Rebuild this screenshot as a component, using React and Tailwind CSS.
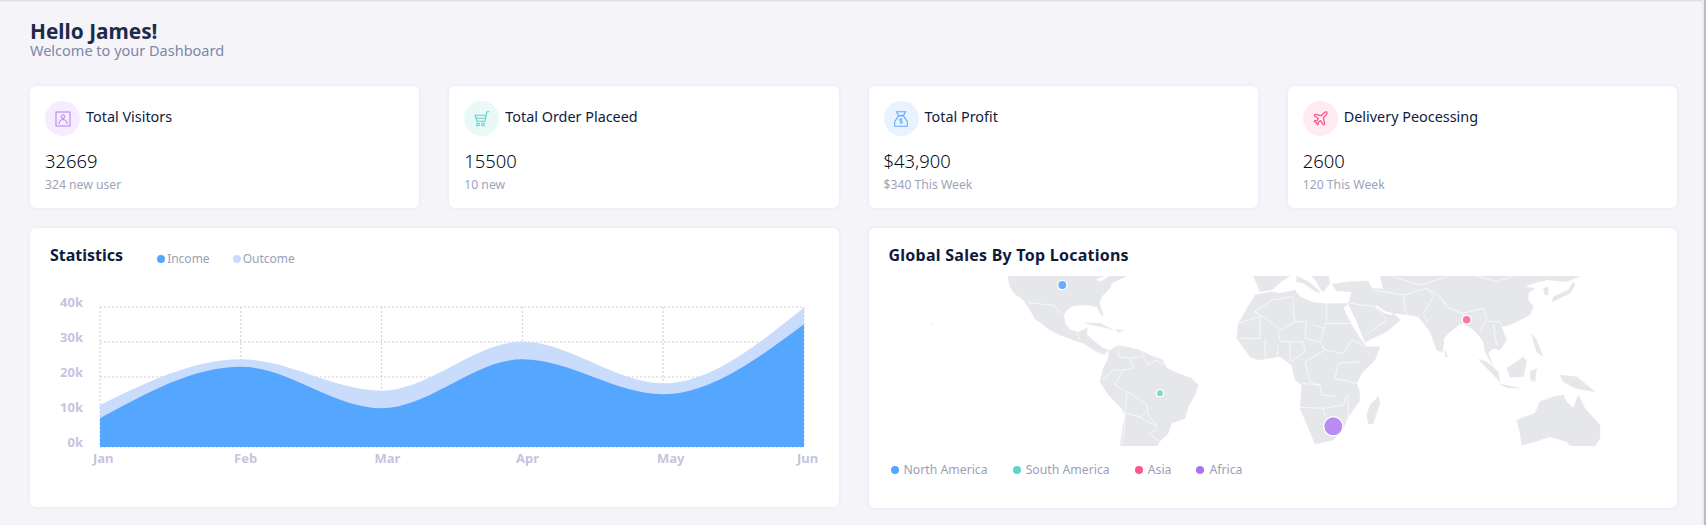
import React from "react";

const font = { fontFamily: '"Noto Sans", "Open Sans", sans-serif' };

const landZ7 = [
  "414,153 418,180 432,205 460,225 478,252 497,285 510,292 535,312 570,330 610,345 640,355 665,372 690,385 705,388 715,375 700,370 680,355 665,342 650,328 652,308 625,322 600,315 585,295 582,270 590,255 610,242 650,240 680,245 695,272 700,270 688,235 695,215 720,190 725,175 745,165 770,153",
  "645,293 690,295 730,315 700,307 665,300",
  "735,313 762,316 745,322",
  "715,378 745,362 770,365 810,375 850,395 880,405 890,430 925,445 965,460 985,480 975,510 955,545 945,580 905,595 895,625 868,650 862,663 750,663 758,610 765,570 755,550 715,510 690,470 700,430 715,400",
];
const bordersZ7 = [
  "475,232 520,238 550,240 578,270",
  "620,322 630,345",
  "745,365 745,395 780,400 790,430 760,435 735,480 770,500 790,510 830,540 835,570 860,600 860,615 835,625 868,650",
  "695,465 730,435 760,435",
  "770,505 765,565 810,575 840,595 860,600",
  "810,575 830,560",
  "765,570 762,630 755,663",
  "780,400 820,395 835,420 860,405 880,420 880,405",
  "820,395 815,375",
];
const landZ8 = [
  // Africa
  "-75,210 -25,200 0,205 45,195 60,215 100,232 140,236 205,235 190,250 215,300 240,340 260,365 300,365 285,405 245,445 230,475 240,505 238,530 205,575 190,610 160,645 105,658 90,620 60,550 65,480 45,465 35,420 0,395 -65,405 -90,395 -130,340 -125,295",
  // Madagascar
  "295,515 300,535 280,595 265,598 260,570 270,540",
  // Iberia / Western Europe
  "-80,153 -75,165 -60,200 -25,195 10,165 30,153",
  // Italy
  "50,153 85,170 115,195 120,205 100,195 70,175 50,170",
  // Balkans
  "95,153 145,153 150,175 130,200 120,190 110,170",
  // Asia
  "155,178 205,170 265,168 275,190 310,192 300,153 900,153 860,170 800,165 760,175 735,185 765,190 745,205 745,225 760,245 750,270 690,300 665,305 680,345 660,375 640,370 625,385 640,425 615,380 610,350 595,330 575,310 545,295 510,320 492,340 488,382 470,375 450,320 435,300 415,275 385,270 340,265 362,285 320,320 255,352 230,290 205,237 215,200 170,198",
  // Japan
  "815,232 870,205 885,180 880,170 865,195 820,215",
  "790,190 805,185 805,210 795,210",
  // Sri Lanka
  "495,375 503,395 495,395",
  // Sumatra, Java
  "595,403 620,410 655,440 660,472 640,450",
  "660,477 720,490 680,488",
  // Borneo
  "680,430 730,395 740,410 730,455 690,457",
  // Sulawesi
  "750,440 770,430 765,470 752,465",
  // Philippines
  "755,325 770,345 790,395 770,380 760,350",
  // New Guinea
  "840,450 890,455 945,500 885,490 850,470",
  // Australia
  "710,585 765,565 780,530 820,515 850,510 860,530 880,550 895,510 915,550 960,600 960,640 945,663 870,663 860,650 810,635 765,650 725,660 720,625",
];
const bordersZ8 = [
  "80,290 75,340 120,350 135,375 190,385 215,345 258,365",
  "130,310 125,345", "100,300 135,310 135,295 210,295", "140,236 140,295",
  "40,215 40,260 45,290 80,290", "0,350 70,350 75,380 35,410",
  "135,375 75,410 90,470 120,480 125,510 170,515", "240,410 175,415 165,460 230,475",
  "65,475 120,480", "60,547 130,550 135,575", "130,550 190,540 200,510", "205,510 205,575",
  "-125,340 -60,340 -60,275 -125,295", "-75,260 5,315 45,290", "-60,275 -75,260 -25,225 40,215", "-5,315 0,350", "-45,340 -45,400", "-5,360 -10,400", "30,350 30,410",
  "280,195 370,210 375,255 385,270", "370,210 440,190 480,215 500,245 545,265 610,250 620,280 600,320",
  "440,190 460,215 430,265 445,295", "340,155 420,180 500,155", "590,153 650,170 700,153",
  "620,290 660,290 680,340", "640,300 650,360", "210,235 285,245 320,285 255,330", "500,245 490,225", "545,265 560,285 580,270",
];

function WorldMap() {
  return (
    <svg width="768" height="170" viewBox="889 276 768 170" className="block">
      <g fill="#e6e7eb" stroke="#e6e7eb" strokeWidth="1" strokeLinejoin="round">
        <g transform="translate(870 225) scale(.33333)">
          {landZ7.map((p, i) => <path key={i} d={"M" + p.split(" ").join(" L") + "Z"} />)}
        </g>
        <g transform="translate(1280 225) scale(.33333)">
          {landZ8.map((p, i) => <path key={i} d={"M" + p.split(" ").join(" L") + "Z"} />)}
        </g>
      </g>
      <g fill="none" stroke="#ffffff" strokeWidth="2" strokeLinejoin="round">
        <g transform="translate(870 225) scale(.33333)">
          {bordersZ7.map((p, i) => <path key={i} d={"M" + p.split(" ").join(" L")} />)}
          <path d="M680,165 L712,153 L690,168" strokeWidth="6" />
        </g>
        <g transform="translate(1280 225) scale(.33333)">
          {bordersZ8.map((p, i) => <path key={i} d={"M" + p.split(" ").join(" L")} />)}
          <path d="M288,243 L315,262 L338,268" strokeWidth="6" />
        </g>
      </g>
      <circle cx="933" cy="324" r="1" fill="#f1f1f4" />
      <g stroke="#ffffff" strokeWidth="1.3">
        <circle cx="1062.3" cy="285" r="4.6" fill="#6aaef8" />
        <circle cx="1160" cy="393.3" r="3.6" fill="#7dd8cb" />
        <circle cx="1466.7" cy="319.7" r="4.4" fill="#f87aa0" />
        <circle cx="1333.3" cy="426.3" r="9.6" fill="#b88cf0" />
      </g>
    </svg>
  );
}

function monotone(xs, ys) {
  const n = xs.length;
  const s = [];
  for (let i = 0; i < n - 1; i++) s.push((ys[i + 1] - ys[i]) / (xs[i + 1] - xs[i]));
  const t = new Array(n).fill(0);
  for (let i = 1; i < n - 1; i++) t[i] = s[i - 1] * s[i] <= 0 ? 0 : (2 * s[i - 1] * s[i]) / (s[i - 1] + s[i]);
  t[0] = (3 * s[0] - t[1]) / 2;
  t[n - 1] = (3 * s[n - 2] - t[n - 2]) / 2;
  let d = `M${xs[0]},${ys[0]}`;
  for (let i = 0; i < n - 1; i++) {
    const h = (xs[i + 1] - xs[i]) / 3;
    d += ` C${xs[i] + h},${ys[i] + t[i] * h} ${xs[i + 1] - h},${ys[i + 1] - t[i + 1] * h} ${xs[i + 1]},${ys[i + 1]}`;
  }
  return d + ` L${xs[n - 1]},447 L${xs[0]},447 Z`;
}

const XS = [100, 240.8, 381.6, 522.4, 663.2, 804];

function Chart() {
  const outcome = monotone(XS, [405, 359.3, 390.7, 341.7, 383.3, 307.5]);
  const income = monotone(XS, [418.3, 366.7, 408.3, 359.3, 394.3, 324.3]);
  const months = ["Jan", "Feb", "Mar", "Apr", "May", "Jun"];
  const labelX = [93, 234, 374.5, 516, 657, 797];
  return (
    <svg width="809" height="200" viewBox="30 276 809 200" className="block">
      <g stroke="#cfcfd4" strokeWidth="1" strokeDasharray="2 2" fill="none">
        {[307, 342, 377, 412, 447].map((y) => <line key={y} x1="100" x2="804" y1={y} y2={y} />)}
        {XS.map((x) => <line key={x} x1={x} x2={x} y1="307" y2="447" />)}
      </g>
      <path d={outcome} fill="#cadcfb" />
      <path d={income} fill="#55a6ff" />
      <g fontSize="13" fontWeight="700" fill="#c5c5de" style={font}>
        {["40k", "30k", "20k", "10k", "0k"].map((l, i) => (
          <text key={l} x="83" y={306.5 + i * 35} textAnchor="end">{l}</text>
        ))}
        {months.map((m, i) => <text key={m} x={labelX[i]} y="463">{m}</text>)}
      </g>
    </svg>
  );
}

const icons = {
  visitors: (
    <svg width="16" height="16" viewBox="0 0 16 16" fill="none" stroke="#b57bf0" strokeWidth="1">
      <rect x="1" y="1" width="14" height="14" />
      <circle cx="8" cy="5.6" r="1.8" />
      <path d="M4 13c0-3 1.6-4.4 4-4.4s4 1.4 4 4.4" />
    </svg>
  ),
  cart: (
    <svg width="16" height="16" viewBox="0 0 16 16" fill="none" stroke="#5fd3c6" strokeWidth="1.1">
      <path d="M15.5 .8h-2.6L11 10.2H3L1 4.2h11" />
      <path d="M2 7.2h9.2" />
      <circle cx="4" cy="13.5" r="1.4" />
      <circle cx="9" cy="13.5" r="1.4" />
    </svg>
  ),
  bag: (
    <svg width="14" height="16" viewBox="0 0 14 16" fill="none" stroke="#62abf8" strokeWidth="1.1">
      <path d="M2.5 .7h9L9.4 4.6h-4.8z" />
      <path d="M4.6 4.6h4.8l3.9 6v4.7H.7v-4.7z" />
      <path d="M8.2 8H6.4a.9.9 0 0 0 0 2h1.2a.9.9 0 0 1 0 2H5.8M7 7v6" strokeWidth=".9" />
    </svg>
  ),
  plane: (
    <svg width="17" height="17" viewBox="0 0 24 24" fill="none" stroke="#f9588f" strokeWidth="1.8" strokeLinejoin="round">
      <path d="M17.8 19.2 16 11l3.5-3.5C21 6 21.5 4 21 3c-1-.5-3 0-4.5 1.5L13 8 4.8 6.2c-.5-.1-.9.1-1.1.5l-.3.5c-.2.5-.1 1 .3 1.3L9 12l-2 3H4l-1 1 3 2 2 3 1-1v-3l3-2 3.5 5.3c.3.4.8.5 1.3.3l.5-.2c.4-.3.6-.7.5-1.2z" />
    </svg>
  ),
};

function StatCard({ icon, bg, title, value, sub }) {
  return (
    <div className="bg-white rounded-[6px] h-[122px] pt-[15px] px-[15px] shadow-[0_0_4px_rgba(60,60,110,0.07)]">
      <div className="flex items-start">
        <div className={`w-[35px] h-[35px] rounded-full flex items-center justify-center shrink-0 ${bg}`}>{icon}</div>
        <div className="ml-[6px] mt-[5px] text-[14.4px] leading-[22px] text-[#0f1b3d]">{title}</div>
      </div>
      <div className="mt-[12px] text-[18.4px] leading-[26px] font-light text-[#050b24]">{value}</div>
      <div className="mt-[2px] text-[12.2px] leading-[18px] text-[#9ea3b8]">{sub}</div>
    </div>
  );
}

function Dot({ className }) {
  return <span className={`w-[8px] h-[8px] rounded-full shrink-0 ${className}`} />;
}

export default function App() {
  const legend = [
    ["North America", "bg-[#55a6ff]"],
    ["South America", "bg-[#5fd3c6]"],
    ["Asia", "bg-[#f9588f]"],
    ["Africa", "bg-[#ab73f0]"],
  ];
  return (
    <div className="w-[1706px] h-[525px] overflow-hidden flex" style={font}>
      <main className="w-[1702px] h-full bg-[#f4f4f9] pl-[30px] pr-[25px] shadow-[inset_0_2px_2px_-1px_rgba(0,0,0,0.12)]">
        <header className="pt-[20px] h-[86px]">
          <h1 className="text-[20.8px] leading-[22px] font-bold text-[#1e2a4a]">Hello James!</h1>
          <p className="text-[14.5px] leading-[17px] text-[#7f86a6]">Welcome to your Dashboard</p>
        </header>
        <section className="grid grid-cols-4 gap-[30px]">
          <StatCard icon={icons.visitors} bg="bg-[#f5edff]" title="Total Visitors" value="32669" sub="324 new user" />
          <StatCard icon={icons.cart} bg="bg-[#e9f9f7]" title="Total Order Placeed" value="15500" sub="10 new" />
          <StatCard icon={icons.bag} bg="bg-[#e9f3ff]" title="Total Profit" value="$43,900" sub="$340 This Week" />
          <StatCard icon={icons.plane} bg="bg-[#ffebf2]" title="Delivery Peocessing" value="2600" sub="120 This Week" />
        </section>
        <section className="grid grid-cols-2 gap-[30px] mt-[20px]">
          <div className="bg-white rounded-[6px] h-[279px] shadow-[0_0_4px_rgba(60,60,110,0.07)] overflow-hidden">
            <div className="flex items-start pt-[15px] pl-[20px] h-[48px]">
              <h2 className="text-[16px] leading-[24px] font-bold text-[#0f1a3a]">Statistics</h2>
              <div className="flex items-center gap-[2px] ml-[34px] mt-[7px] text-[12px] leading-[18px] text-[#9a9fb5]">
                <Dot className="bg-[#55a6ff]" /><span>Income</span>
                <Dot className="bg-[#cadcfb] ml-[21px]" /><span>Outcome</span>
              </div>
            </div>
            <Chart />
          </div>
          <div className="bg-white rounded-[6px] h-[280px] shadow-[0_0_4px_rgba(60,60,110,0.07)] pt-[15px] px-[20px] overflow-hidden">
            <h2 className="text-[16px] leading-[24px] font-bold tracking-[0.25px] text-[#0f1a3a]">Global Sales By Top Locations</h2>
            <div className="mt-[9px]"><WorldMap /></div>
            <div className="flex items-center mt-[15px] ml-[2px] gap-[25px] text-[12.25px] leading-[18px] text-[#9a9fb5]">
              {legend.map(([l, c]) => (
                <div key={l} className="flex items-center gap-[5px]"><Dot className={c} /><span>{l}</span></div>
              ))}
            </div>
          </div>
        </section>
      </main>
      <div className="w-[2px] h-full bg-[#ececf0]" />
      <div className="w-[2px] h-full bg-[#bdbdbd]" />
    </div>
  );
}
